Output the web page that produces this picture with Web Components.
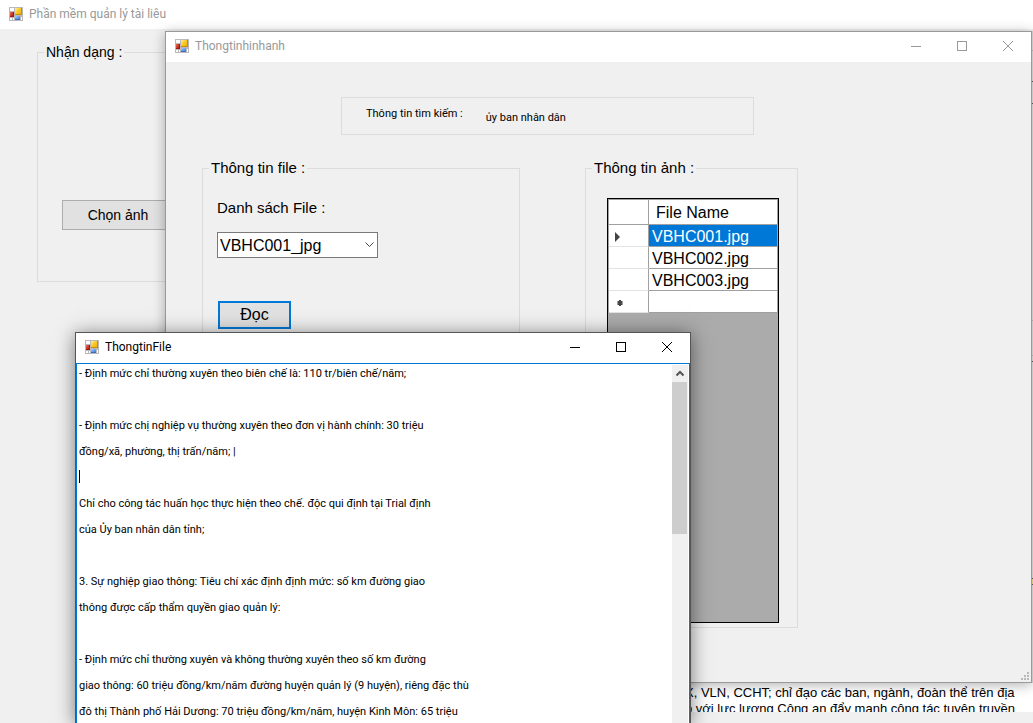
<!DOCTYPE html>
<html lang="vi">
<head>
<meta charset="utf-8">
<title>Phần mềm quản lý tài liêu</title>
<style>
  html, body { margin: 0; height: 100%; overflow: hidden; }
  body { background: #f0f0f0; color: #000; font-family: "Liberation Sans", Arial, sans-serif; font-size: 15px; }
</style>
</head>
<body>
<app-desktop></app-desktop>

<script>
/* Windows Forms default icon: four tiles, three of them coloured */
class FormIcon extends HTMLElement {
  connectedCallback() {
    this.attachShadow({ mode: 'open' }).innerHTML = `
      <style>:host { display: block; width: 14px; height: 14px; flex: none } svg { display: block }</style>
      <svg width="14" height="14" viewBox="0 0 14 14" shape-rendering="crispEdges" aria-hidden="true">
        <defs>
          <linearGradient id="y" x2="1" y2="1"><stop offset="0" stop-color="#fff0a0"/><stop offset=".5" stop-color="#fbc926"/><stop offset="1" stop-color="#f0b010"/></linearGradient>
          <linearGradient id="b" x2="1" y2="1"><stop offset="0" stop-color="#a8d0ff"/><stop offset="1" stop-color="#3a78e0"/></linearGradient>
          <linearGradient id="r" x2="1" y2="1"><stop offset="0" stop-color="#e8705a"/><stop offset="1" stop-color="#b8180c"/></linearGradient>
        </defs>
        <rect width="14" height="14" fill="#b9b9b9"/>
        <path fill="#fff" d="M1 1h4v3H1zM1 11h2v2H1zM4 11h1v2H4zM12 10h1v3h-1z"/>
        <rect x="1" y="5" width="4" height="5" fill="#a01810"/><rect x="1" y="5" width="3" height="4" fill="url(#r)"/>
        <rect x="6" y="1" width="7" height="7" fill="#c89000"/><rect x="6" y="1" width="6" height="6" fill="url(#y)"/>
        <rect x="6" y="9" width="5" height="4" fill="#3a6cc4"/><rect x="6" y="9" width="5" height="3" fill="url(#b)"/>
      </svg>`;
  }
}
customElements.define('form-icon', FormIcon);

/* Title bar; the "controls" attribute adds minimise, maximise and close */
class TitleBar extends HTMLElement {
  connectedCallback() {
    const controls = this.hasAttribute('controls') ? `
      <div class="controls">
        <button aria-label="Thu nhỏ"><svg width="12" height="12"><path d="M1 6.5h10"/></svg></button>
        <button aria-label="Phóng to"><svg width="12" height="12"><rect x="1.5" y="1.5" width="9" height="9"/></svg></button>
        <button aria-label="Đóng"><svg width="12" height="12"><path d="M1 1l10 10M11 1L1 11"/></svg></button>
      </div>` : '';
    this.attachShadow({ mode: 'open' }).innerHTML = `
      <style>
        :host { display: flex; align-items: center; gap: 6px; height: 30px; box-sizing: border-box; padding: 0 0 2px 9px; flex: none;
                background: #fff; color: #999; font: 12px/16px Roboto, "Open Sans", sans-serif; }
        :host([active]) { color: #000; }
        .title { flex: 1; white-space: nowrap; }
        .controls { display: flex; height: 100%; }
        button { width: 46px; border: 0; padding: 0; background: none; color: inherit; display: grid; place-items: center; }
        svg { display: block; fill: none; stroke: currentColor; }
      </style>
      <form-icon></form-icon><span class="title"><slot></slot></span>${controls}`;
  }
}
customElements.define('title-bar', TitleBar);

class GroupBox extends HTMLElement {
  connectedCallback() {
    this.attachShadow({ mode: 'open' }).innerHTML = `
      <style>
        :host { display: block; }
        fieldset { box-sizing: border-box; height: 100%; min-width: 0; margin: 0; padding: 0; border: 1px solid #dcdcdc; }
        legend { margin-left: 6px; padding: 0 2px; line-height: 18px; white-space: nowrap; }
      </style>
      <fieldset><legend>${this.getAttribute('caption')}</legend><slot></slot></fieldset>`;
  }
}
customElements.define('group-box', GroupBox);

class PushButton extends HTMLElement {
  connectedCallback() {
    this.attachShadow({ mode: 'open' }).innerHTML = `
      <style>
        :host { display: block; }
        button { box-sizing: border-box; width: 100%; height: 100%; padding: 0; color: #000;
                 font: inherit; background: #e1e1e1; border: 1px solid #adadad; }
        :host([default]) button { border: 2px solid #0078d7; }
      </style>
      <button><slot></slot></button>`;
  }
}
customElements.define('push-button', PushButton);

class FilePicker extends HTMLElement {
  connectedCallback() {
    this.attachShadow({ mode: 'open' }).innerHTML = `
      <style>
        :host { display: block; }
        label { display: block; line-height: 20px; }
        .box { display: grid; width: 161px; height: 26px; margin-top: 14px; font-size: 16px; }
        select, svg { grid-area: 1 / 1; }
        select { appearance: none; box-sizing: border-box; margin: 0; padding: 0 2px; border: 1px solid #7a7a7a; border-radius: 0;
                 background: #fff; color: #000; font: inherit; }
        svg { place-self: center end; margin-right: 4px; pointer-events: none; }
      </style>
      <label for="file">Danh sách File :</label>
      <div class="box">
        <select id="file"><option>VBHC001_jpg</option></select>
        <svg width="9" height="6" viewBox="0 0 9 6" fill="none" stroke="#444"><path d="M.5.5l4 4 4-4"/></svg>
      </div>`;
  }
}
customElements.define('file-picker', FilePicker);

class ImageGrid extends HTMLElement {
  connectedCallback() {
    this.attachShadow({ mode: 'open' }).innerHTML = `
      <style>
        :host { display: block; box-sizing: border-box; border: 1px solid #000; background: #ababab; font-size: 16px; }
        table { width: 100%; border-collapse: separate; border-spacing: 0; table-layout: fixed;
                border-left: 1px solid #a0a0a0; border-top: 1px solid #a0a0a0; box-sizing: border-box; }
        col:first-child { width: 40px; }
        td, th { box-sizing: border-box; height: 22px; padding: 2px 0 0 3px; background: #fff; font-weight: normal; text-align: left;
                 line-height: 18px; border: 0 solid #a0a0a0; border-width: 0 1px 1px 0; }
        thead th { height: 25px; padding-left: 7px; }
        tbody th { padding-left: 5px; border-bottom-color: #e3e3e3; }
        .on td { background: #0078d7; color: #fff; }
        svg { display: block; }
      </style>
      <table>
        <colgroup><col><col></colgroup>
        <thead><tr><th></th><th scope="col">File Name</th></tr></thead>
        <tbody>
          <tr class="on"><th><svg width="10" height="10"><path d="M1 0l5 5-5 5z" fill="#444"/></svg></th><td>VBHC001.jpg</td></tr>
          <tr><th></th><td>VBHC002.jpg</td></tr>
          <tr><th></th><td>VBHC003.jpg</td></tr>
          <tr><th><svg width="10" height="10"><path d="M6 2v6M3.5 3.5l5 3M8.5 3.5l-5 3" stroke="#444" stroke-width="2"/></svg></th><td></td></tr>
        </tbody>
      </table>`;
  }
}
customElements.define('image-grid', ImageGrid);

/* Scanned document preview at the foot of the main window */
class DocumentPreview extends HTMLElement {
  connectedCallback() {
    this.attachShadow({ mode: 'open' }).innerHTML = `
      <style>
        :host { display: block; overflow: hidden; background: #fff; font-size: 13px; line-height: 16px; white-space: nowrap; }
        p { margin: 0; }
      </style>
      <p>X, VLN, CCHT; chỉ đạo các ban, ngành, đoàn thể trên địa</p>
      <p>p với lực lượng Công an đẩy mạnh công tác tuyên truyền</p>`;
  }
}
customElements.define('document-preview', DocumentPreview);

class MainWindow extends HTMLElement {
  connectedCallback() {
    this.attachShadow({ mode: 'open' }).innerHTML = `
      <style>
        :host { display: flex; flex-direction: column; height: 100%; background: #f0f0f0; }
        title-bar { height: 29px; }
        main { flex: 1; display: grid; grid-template-columns: 300px 1fr; padding: 14px 0 11px 37px; }
        group-box { height: 239px; font-size: 14px; }
        push-button { width: 112px; height: 30px; margin: 139px 0 0 24px; }
        document-preview { align-self: end; box-sizing: border-box; height: 40px; padding: 13px 0 0 348px; }
      </style>
      <title-bar>Phần mềm quản lý tài liêu</title-bar>
      <main>
        <group-box caption="Nhận dạng :"><push-button>Chọn ảnh</push-button></group-box>
        <document-preview></document-preview>
      </main>`;
  }
}
customElements.define('main-window', MainWindow);

class ImageInfoWindow extends HTMLElement {
  connectedCallback() {
    this.attachShadow({ mode: 'open' }).innerHTML = `
      <style>
        :host { display: flex; flex-direction: column; box-sizing: border-box; border: 1px solid #999; background: #f0f0f0;
                box-shadow: 0 2px 12px rgba(0,0,0,.3); }
        .body { flex: 1; display: flex; flex-direction: column; gap: 24px; padding: 35px 36px 54px; }
        .search { box-sizing: border-box; width: 413px; height: 38px; margin-left: 139px; padding: 8px 24px; display: flex; gap: 23px;
                  border: 1px solid #dcdcdc; font: 11px/16px Roboto, sans-serif; }
        .search output { padding-top: 4px; }
        .groups { flex: 1; display: grid; grid-template-columns: 318px 213px; column-gap: 65px; }
        .file { padding: 21px 0 0 14px; }
        .file push-button { width: 73px; height: 28px; margin: 43px 0 0 1px; font-size: 16px; }
        image-grid { width: 172px; height: 425px; margin: 21px 0 0 21px; }
        .grip { position: absolute; right: 2px; bottom: 2px; }
      </style>
      <title-bar controls>Thongtinhinhanh</title-bar>
      <div class="body">
        <div class="search"><label for="query">Thông tin tìm kiếm :</label><output id="query">ủy ban nhân dân</output></div>
        <div class="groups">
          <group-box caption="Thông tin file :"><div class="file"><file-picker></file-picker><push-button default>Đọc</push-button></div></group-box>
          <group-box caption="Thông tin ảnh :"><image-grid></image-grid></group-box>
        </div>
      </div>
      <svg class="grip" width="8" height="8" fill="#b8b8b8" aria-hidden="true"><path d="M6 0h2v2H6zM3 3h2v2H3zM6 3h2v2H6zM0 6h2v2H0zM3 6h2v2H3zM6 6h2v2H6z"/></svg>`;
  }
}
customElements.define('image-info-window', ImageInfoWindow);

const RECOGNISED_TEXT = [
  '- Định mức chỉ thường xuyên theo biên chế là: 110 tr/biên chế/năm;',
  '',
  '- Định mức chị nghiệp vụ thường xuyên theo đơn vị hành chính: 30 triệu',
  'đồng/xã, phường, thị trấn/năm; |',
  '',
  'Chỉ cho công tác huấn học thực hiện theo chế. độc qui định tại Trial định',
  'của Ủy ban nhân dân tỉnh;',
  '',
  '3. Sự nghiệp giao thông: Tiêu chí xác định định mức: số km đường giao',
  'thông được cấp thẩm quyền giao quản lý:',
  '',
  '- Định mức chỉ thường xuyên và không thường xuyên theo số km đường',
  'giao thông: 60 triệu đồng/km/năm đường huyện quản lý (9 huyện), riêng đặc thù',
  'đô thị Thành phố Hải Dương: 70 triệu đồng/km/năm, huyện Kinh Môn: 65 triệu'
].join('\n');

class FileTextWindow extends HTMLElement {
  connectedCallback() {
    this.attachShadow({ mode: 'open' }).innerHTML = `
      <style>
        :host { display: flex; flex-direction: column; box-sizing: border-box; border: 1px solid #555; border-bottom: 0; background: #fff;
                box-shadow: 0 2px 18px rgba(0,0,0,.5); }
        .editor { flex: 1; display: flex; min-height: 0; border: 1px solid #0078d7; border-bottom: 0; padding: 1px 1px 0 0; }
        .page { position: relative; flex: 1; display: flex; }
        textarea { flex: 1; margin: -4px 0 0; padding: 0 0 0 2px; border: 0; outline: 0; resize: none; overflow: hidden; background: none; color: #000;
                   font: 11px/26px Roboto, sans-serif; }
        .caret { position: absolute; left: 2px; top: 105px; width: 1px; height: 13px; background: #000; }
        .scroll { width: 16px; background: #f0f0f0; display: flex; flex-direction: column; }
        .scroll button { height: 17px; padding: 0; border: 0; background: none; display: grid; place-items: center; }
        .thumb { width: 15px; height: 152px; background: #cdcdcd; }
      </style>
      <title-bar controls active>ThongtinFile</title-bar>
      <div class="editor">
        <div class="page"><textarea aria-label="Nội dung file" spellcheck="false"></textarea><span class="caret"></span></div>
        <div class="scroll"><button aria-label="Cuộn lên"><svg width="8" height="7" fill="none" stroke="#555" stroke-width="2"><path d="M.5 5.5L4 2l3.500 3.500"/></svg></button><div class="thumb"></div></div>
      </div>`;
    this.shadowRoot.querySelector('textarea').value = RECOGNISED_TEXT;
  }
}
customElements.define('file-text-window', FileTextWindow);

/* Edge of the main window's own controls that shows to the right of the front window */
class EdgeStrip extends HTMLElement {
  connectedCallback() {
    this.attachShadow({ mode: 'open' }).innerHTML = `
      <style>
        :host { display: block; background: #c8c8c8; }
        svg { display: block; }
      </style>
      <svg width="1" height="652" shape-rendering="crispEdges" aria-hidden="true">
        <path fill="#555" d="M0 50h1v1H0zM0 72h1v1H0zM0 330h1v1H0zM0 547h1v1H0zM0 553h1v1H0z"/>
        <path fill="#aaa" d="M0 19h1v1H0zM0 289h1v1H0zM0 324h1v1H0z"/>
        <path fill="#d8c878" d="M0 548h1v5H0z"/>
      </svg>`;
  }
}
customElements.define('edge-strip', EdgeStrip);

class AppDesktop extends HTMLElement {
  connectedCallback() {
    this.attachShadow({ mode: 'open' }).innerHTML = `
      <style>
        :host { display: block; position: relative; height: 100%; overflow: hidden; }
        image-info-window { position: absolute; left: 165px; right: 1px; top: 31px; height: 652px; }
        edge-strip { position: absolute; right: 0; top: 31px; width: 1px; height: 652px; }
        file-text-window { position: absolute; left: 75px; top: 332px; bottom: 0; width: 616px; }
      </style>
      <main-window></main-window>
      <image-info-window></image-info-window>
      <edge-strip></edge-strip>
      <file-text-window></file-text-window>`;
  }
}
customElements.define('app-desktop', AppDesktop);
</script>
</body>
</html>
